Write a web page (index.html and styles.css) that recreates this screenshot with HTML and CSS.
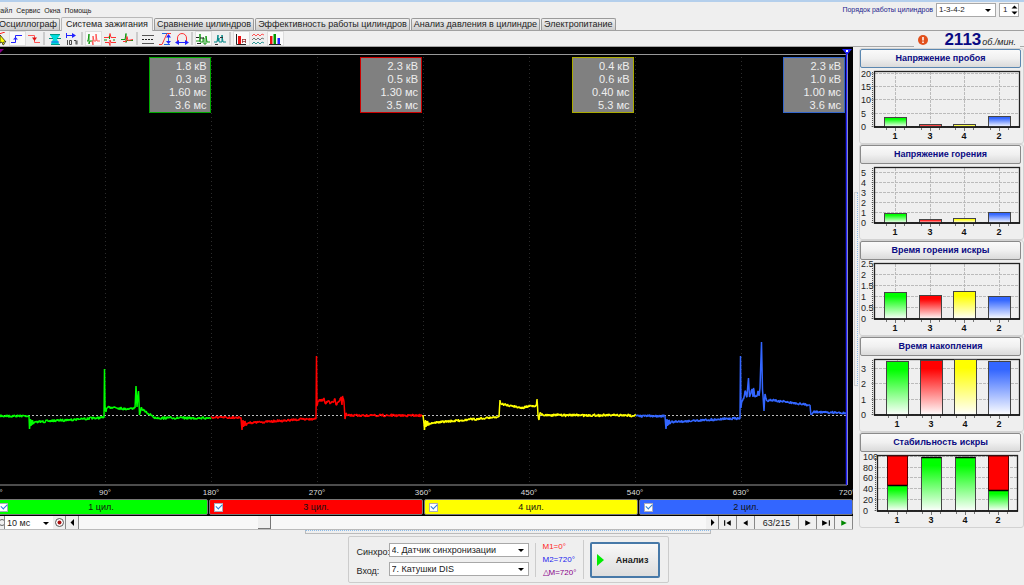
FILE: index.html
```html
<!DOCTYPE html>
<html lang="ru">
<head>
<meta charset="utf-8">
<title>Система зажигания</title>
<link rel="stylesheet" href="styles.css">
</head>
<body>
<header class="top">
  <div class="menu-row">
    <nav class="menu">
      <button>Файл</button><button>Сервис</button><button>Окна</button><button>Помощь</button>
    </nav>
    <div class="order">
      <label for="order">Порядок работы цилиндров</label>
      <span class="combo order-combo"><select id="order"><option>1-3-4-2</option></select></span>
      <span class="spin"><input id="first" type="text" value="1" aria-label="Первый цилиндр"><svg width="7" height="10" viewBox="0 0 7 10"><path d="M0.500 3.500 3.500 0.500 6.500 3.500zM0.500 6.500h6L3.500 9.500z"/></svg></span>
    </div>
  </div>
  <div class="tabs" role="tablist">
    <button class="tab" role="tab">Осциллограф</button>
    <button class="tab active" role="tab">Система зажигания</button>
    <button class="tab" role="tab">Сравнение цилиндров</button>
    <button class="tab" role="tab">Эффективность работы цилиндров</button>
    <button class="tab" role="tab">Анализ давления в цилиндре</button>
    <button class="tab" role="tab">Электропитание</button>
  </div>
  <div class="tool-row">
    <div class="tools">
      <button class="tool" aria-label="Курсор"><svg viewBox="0 0 14 14"><path d="M6 2 12 0" stroke="#f22"/><path d="M7 3v8l2-1 1 3 1.500-1-1-2h2.500z" fill="#ff0" stroke="#222" stroke-width=".8"/></svg></button>
      <button class="tool on" aria-label="Фронт"><svg viewBox="0 0 14 14"><path d="M1 10.500h4.500v-7H12" stroke="#22f"/><path d="M3 7.500h5L5.500 5z" fill="#22f"/></svg></button>
      <button class="tool" aria-label="Спад"><svg viewBox="0 0 14 14"><path d="M1 3.500h6.500v7H13" stroke="#f55"/><path d="M5 5.500h5L7.500 9z" fill="#d11"/></svg></button>
      <i class="sep"></i>
      <button class="tool" aria-label="Развёртка"><svg viewBox="0 0 14 14"><path d="M2 2.500h10M3 12.500h9" stroke="#098"/><path d="M2 3h10L9 7l2 5H3l2-5z" fill="#0dd"/><path d="M1 6.500h4m4 0h4" stroke="#087"/><path d="M3 10h8" stroke="#26e"/></svg></button>
      <button class="tool" aria-label="Градусы"><svg viewBox="0 0 14 14"><path d="M1.500 1v5M1 3.500h9" stroke="#22f"/><path d="M7 1v5l4-2.500z" fill="#22f"/><path d="M2.500 8v5m2-4.500h2v4h-2zm4.500 0h2v4m1-4v4" stroke="#222" stroke-width=".8"/></svg></button>
      <i class="sep"></i>
      <button class="tool on" aria-label="Парад"><svg viewBox="0 0 14 14"><path d="M1 9h1l1-7v10l1-3h3" stroke="#191"/><path d="M6 9l1 4V4l1 5h2V2l1 7h3" stroke="#f55"/></svg></button>
      <button class="tool" aria-label="Растр"><svg viewBox="0 0 14 14"><path d="M1 5.500h5l1-4 1 4h5M2 10.500h4l1 3V8l1 2.500h5" stroke="#f33"/><path d="M6.500 7V4" stroke="#191"/><path d="M1 8h3m6 0h2" stroke="#191"/></svg></button>
      <button class="tool" aria-label="Наложение"><svg viewBox="0 0 14 14"><path d="M1 7.500h4l1-6v9l1-2h6" stroke="#191"/><path d="M3 9.500h3l1-5 1 4 5-1" stroke="#f33"/></svg></button>
      <i class="sep"></i>
      <button class="tool" aria-label="Линии"><svg viewBox="0 0 14 14"><path d="M1 3.500h12M1 11.500h12" stroke="#555"/><path d="M1 7.500h12" stroke="#222" stroke-dasharray="2 1"/></svg></button>
      <button class="tool" aria-label="Размах"><svg viewBox="0 0 14 14"><path d="M1 12.500h3L9 1.500h4" stroke="#f33"/><path d="M4 1.500h5M6 12.500h6M10.500 4v7" stroke="#26d"/><path d="M8 5.500h5L10.500 2zM8 9h5l-2.500 3z" fill="#22f"/></svg></button>
      <button class="tool" aria-label="Период"><svg viewBox="0 0 14 14"><path d="M2.500 10V6a4.500 4.500 0 0 1 9 0v4" stroke="#f33"/><path d="M3 10.500h8" stroke="#22f"/><path d="M4 8v5L0 10.500zM10 8v5l4-2.500z" fill="#22f"/></svg></button>
      <i class="sep"></i>
      <button class="tool on" aria-label="Маркеры"><svg viewBox="0 0 14 14"><path d="M0 9h4V2v8h3V6h1v6h2V4l1 6h3" stroke="#191"/><path d="M0 5.500h3M4 6h4M1 11.500h4" stroke="#222"/></svg></button>
      <button class="tool" aria-label="Сигнал"><svg viewBox="0 0 14 14"><path d="M1 10h3l1-7v6l1-3v4h3V3l1 7h3" stroke="#088"/><path d="M2 12.500h3M7 5.500h3" stroke="#333"/></svg></button>
      <i class="sep"></i>
      <button class="tool on" aria-label="Гистограмма"><svg viewBox="0 0 14 14"><path d="M2.500 2v10.500H12" stroke="#222"/><path d="M4 4h3v8H4z" fill="#e11"/><path d="M8 7.500h4M8 9.500h4M8.500 7v4m3-4v4" stroke="#933" stroke-width=".8"/></svg></button>
      <button class="tool" aria-label="Волны"><svg viewBox="0 0 14 14"><path d="M1 4l2-2 2 2 2-2 2 2 2-2 2 1" stroke="#f55"/><path d="M1 8l2-2 2 2 2-2 2 2 2-2 2 1" stroke="#777"/><path d="M1 12l2-2 2 2 2-2 2 2 2-2 2 1" stroke="#399"/></svg></button>
      <button class="tool on" aria-label="Диаграммы"><svg viewBox="0 0 14 14"><path d="M2 4h2.500v8H2z" fill="#e11"/><path d="M5.500 2H8v10H5.500z" fill="#090"/><path d="M9.500 6H12v6H9.500z" fill="#22f"/><path d="M1 12.500h12" stroke="#222"/></svg></button>
    </div>
    <div class="rpm">
      <svg width="10" height="10" viewBox="0 0 10 10"><circle cx="5" cy="5" r="5" fill="#e2501c"/><path d="M5 2v3.500M5 6.500v1.500" stroke="#fff" stroke-width="1.500"/></svg>
      <strong>2113</strong><em>об./мин.</em>
    </div>
  </div>
</header>

<main class="main">
  <section class="scope">
    <div class="plot">
      <svg class="wave" viewBox="0 47 853 440" preserveAspectRatio="none" id="wave"></svg>
      <div class="readouts">
        <div class="readout green">1.8 кВ<br>0.3 кВ<br>1.60 мс<br>3.6 мс</div>
        <div class="readout red">2.3 кВ<br>0.5 кВ<br>1.30 мс<br>3.5 мс</div>
        <div class="readout yellow">0.4 кВ<br>0.6 кВ<br>0.40 мс<br>5.3 мс</div>
        <div class="readout blue">2.3 кВ<br>1.0 кВ<br>1.00 мс<br>3.6 мс</div>
      </div>
    </div>
    <div class="degrees"><span>0°</span><span>90°</span><span>180°</span><span>270°</span><span>360°</span><span>450°</span><span>540°</span><span>630°</span><span>720°</span></div>
    <div class="channels">
      <label class="channel green"><input type="checkbox" checked><span>1 цил.</span></label>
      <label class="channel red"><input type="checkbox" checked><span>3 цил.</span></label>
      <label class="channel yellow"><input type="checkbox" checked><span>4 цил.</span></label>
      <label class="channel blue"><input type="checkbox" checked><span>2 цил.</span></label>
    </div>
    <div class="transport">
      <button class="nav cut" aria-label="Масштаб"><svg viewBox="0 0 9 9"><circle cx="4" cy="4.500" r="3" fill="none" stroke="#666"/></svg></button>
      <span class="combo time"><select aria-label="Развёртка"><option>10 мс</option></select></span>
      <button class="nav" aria-label="Запись"><svg viewBox="0 0 9 9"><circle cx="4.500" cy="4.500" r="4" fill="#fff" stroke="#555"/><circle cx="4.500" cy="4.500" r="2" fill="#a11"/></svg></button>
      <button class="nav" aria-label="Влево"><svg viewBox="0 0 9 9"><path d="M6 1v7L2.500 4.500z"/></svg></button>
      <div class="track"><div class="before"></div><div class="thumb"></div></div>
      <button class="nav" aria-label="Вправо"><svg viewBox="0 0 9 9"><path d="M3 1v7l3.500-3.500z"/></svg></button>
      <button class="nav wide" aria-label="В начало"><svg viewBox="0 0 9 9"><path d="M1 2h1v5H1zM7 2v5L3 4.500z"/></svg></button>
      <button class="nav wide" aria-label="Назад"><svg viewBox="0 0 9 9"><path d="M6 2v5L2 4.500z"/></svg></button>
      <output class="frame">63/215</output>
      <button class="nav wide" aria-label="Вперёд"><svg viewBox="0 0 9 9"><path d="M2 2v5l5-2.500z"/></svg></button>
      <button class="nav wide" aria-label="В конец"><svg viewBox="0 0 9 9"><path d="M1 2v5l5-2.500zM7 2h1v5H7z"/></svg></button>
      <button class="nav wide" aria-label="Пуск"><svg viewBox="0 0 9 9"><path d="M2 2v5l5-2.500z" fill="#080"/></svg></button>
    </div>
  </section>
  <div class="vsplit"><i></i></div>
  <aside class="charts" id="charts"></aside>
</main>
<div class="hsplit"><i></i></div>
<footer class="footer">
  <div class="control">
    <div class="inputs">
      <label for="sync">Синхро:</label><span class="combo"><select id="sync"><option>4. Датчик синхронизации</option></select></span>
      <label for="input">Вход:</label><span class="combo"><select id="input"><option>7. Катушки DIS</option></select></span>
    </div>
    <div class="marks"><span class="m1">M1=0°</span><span class="m2">M2=720°</span><span class="dm">△M=720°</span></div>
    <button class="analyze"><svg width="7" height="12" viewBox="0 0 7 12"><path d="M0 0v12l7-6z" fill="#0e0"/></svg><span>Анализ</span></button>
  </div>
</footer>
<script src="app.js"></script>
</body>
</html>
```
FILE: styles.css
```css
* { box-sizing: border-box; }
body {
  margin: 0; height: 100vh; display: flex; flex-direction: column; overflow: hidden;
  background: #efefef; color: #222; font: 9px/12px "Liberation Sans", Arial, sans-serif;
  border-top: 2px solid #b4cfec;
}
button, select, input { font: inherit; color: inherit; margin: 0; padding: 0; border: 0; border-radius: 0; background: none; }
.menu-row { display: flex; justify-content: space-between; height: 15px; }
.menu { display: flex; gap: 4px; margin-left: -5px; padding-top: 3px; font: 7px/12px "Liberation Sans", Arial, sans-serif; }
.order { display: flex; align-items: center; color: #22228c; padding-right: 5px; gap: 3px; font: 7px/12px "Liberation Sans", Arial, sans-serif; }
.combo { position: relative; display: block; background: #fff; border: 1px solid #a8a8a8; color: #222; }
.combo select { appearance: none; display: block; width: 100%; height: 100%; padding: 0 14px 0 2px; outline: 0; }
.combo::after { content: ""; position: absolute; right: 4px; top: 50%; margin-top: -1px; border: 3px solid transparent; border-top-color: #000; border-bottom: 0; pointer-events: none; }
.order-combo { width: 60px; height: 14px; font-size: 8px; }
.spin { display: flex; align-items: center; width: 20px; height: 14px; background: #fff; border: 1px solid #a8a8a8; color: #222; font-size: 8px; }
.spin input { width: 11px; min-width: 0; padding-left: 3px; }

.tabs { display: flex; align-items: flex-end; gap: 1px; height: 14px; margin-left: -4px; border-bottom: 1px solid #a0a0a0; font: 9px/11px "Liberation Sans", Arial, sans-serif; }
.tab { height: 12px; padding: 0 2px; border: 1px solid #9a9a9a; border-bottom: 0; border-radius: 2px 2px 0 0; background: linear-gradient(#f0f0f0, #cdcdcd); white-space: nowrap; }
.tab.active { height: 14px; padding: 0 4px; margin-bottom: -1px; background: #efefef; border-color: #b8b8b8; }
.tool-row { display: flex; justify-content: space-between; height: 16px; border-bottom: 1px solid #a8a8a8; }
.tools { display: flex; margin-left: -8px; }
.tool { width: 17px; height: 15px; padding: 0 1px; }
.tool.on { background: #fafafa; border: 1px solid #ddd; padding: 0; }
.tool svg { display: block; width: 14px; height: 14px; fill: none; }
.sep { width: 4px; margin: 1px 0; border-left: 2px solid #ccc; }
.rpm { display: flex; align-items: center; height: 18px; padding: 0 4px; margin-right: 4px; background: #efefef; }
.rpm strong { color: #0a0a82; font-size: 17px; line-height: 18px; margin-left: 16px; }
.rpm em { font-size: 9px; margin: 4px 0 0 1px; }

.main { flex: 1; min-height: 0; display: grid; grid-template-columns: minmax(0, 1fr) 6px 165px; }
.scope { display: flex; flex-direction: column; min-width: 0; min-height: 0; overflow: hidden; background: #000; }
.plot { position: relative; flex: 1; min-height: 0; }
.wave { position: absolute; inset: 0; width: 100%; height: 100%; }
.readouts { position: absolute; inset: 0 7px auto 0; display: grid; grid-template-columns: repeat(4, 1fr); padding-top: 10px; }
.readout { justify-self: end; width: 62px; margin-right: 1px; padding: 2px 3px 0 0; height: 56px; background: #808080; border: 1px solid; color: #eee; text-align: right; font-size: 11px; line-height: 13px; white-space: nowrap; }
.readout.green { border-color: #0a0; }
.readout.red { border-color: #c00; }
.readout.yellow { border-color: #aa0; }
.readout.blue { border-color: #36c; }
.degrees { display: flex; justify-content: space-between; height: 11px; margin: 0 6px 0 -1px; color: #ddd; font: 8px/11px "Liberation Sans", Arial, sans-serif; }
.degrees span { display: flex; justify-content: center; width: 0; white-space: nowrap; }
.channels { display: flex; height: 18px; margin-left: -6px; padding: 1px 0; gap: 1px; }
.channel { flex: 1; display: flex; align-items: center; padding-left: 4px; border: 1px solid #777; border-radius: 2px; color: #111; }
.channel span { flex: 1; text-align: center; padding-right: 13px; }
.channel.green { background: #0f0; }
.channel.red { background: #f00; }
.channel.yellow { background: #ff0; }
.channel.blue { background: #36f; }
.channel input { appearance: none; display: grid; place-items: center; width: 9px; height: 9px; background: #fff; border: 1px solid #aab; }
.channel input:checked::after { content: ""; width: 5px; height: 3px; margin-bottom: 2px; border: solid #2a7fd8; border-width: 0 0 1px 1px; transform: rotate(-45deg); }
.transport { display: flex; height: 14px; background: #fff; border-bottom: 1px solid #bbb; }
.nav { display: flex; align-items: center; justify-content: center; width: 13px; background: #f0f0f0; border-right: 1px solid #888; }
.nav.cut { width: 5px; overflow: hidden; }
.nav svg { flex: none; width: 9px; height: 9px; }
.nav.wide { width: 18px; }
.nav.wide svg { width: 10px; height: 10px; }
.time { width: 48px; border-width: 0; }
.track { flex: 1; display: flex; background: #f8f8f8; }
.before { width: 28.500%; }
.thumb { width: 13px; background: #efefef; border-right: 1px solid #777; border-bottom: 1px solid #777; }
.frame { width: 44px; text-align: center; background: #f0f0f0; border-right: 1px solid #999; line-height: 14px; }
.vsplit { display: flex; align-items: center; justify-content: center; }
.vsplit i { width: 4px; height: 194px; border: 1px solid #ccc; border-right-style: dotted; border-right-color: #8bbbe8; }
.hsplit { display: flex; justify-content: center; height: 5px; padding-right: 9px; }
.hsplit i { width: 40%; height: 4px; border: 1px solid #bbb; border-top-style: dotted; border-top-color: #8bbbe8; }

.charts { display: flex; flex-direction: column; padding-top: 1px; }
.chart { height: 96px; padding: 0 2px 0 0; border: 1px solid #d2d2d2; border-radius: 3px; }
.chart-title { display: block; width: 100%; height: 19px; border: 1px solid #8a8a8a; border-radius: 2px; background: linear-gradient(#fafafa, #f0f0f0 50%, #dadada); color: #0a0a82; font-weight: bold; font-size: 9px; line-height: 17px; }
.chart:first-child .chart-title { border: 1px solid #5b87b0; }
.chart svg { display: block; width: 100%; height: 74px; margin-top: 2px; overflow: visible; font-size: 9px; }
.chart .cyl { font-weight: bold; }

.footer { display: flex; justify-content: center; height: 50px; padding: 1px 8px 2px 0; }
.control { display: flex; align-items: center; width: 321px; border: 1px solid #ccc; border-radius: 2px; padding: 0 8px; }
.inputs { display: grid; grid-template-columns: 32px 140px; row-gap: 4px; align-items: center; padding-right: 6px; border-right: 1px solid #ccc; }
.inputs label { white-space: nowrap; padding-top: 3px; }
.inputs .combo { height: 14px; }
.marks { display: flex; flex-direction: column; width: 49px; margin-right: 6px; padding-left: 7px; border-right: 1px solid #ccc; font-size: 8px; line-height: 13px; white-space: nowrap; }
.m1 { color: #f22; }
.m2 { color: #22e; }
.dm { color: #808; }
.analyze { display: flex; align-items: center; gap: 12px; width: 71px; height: 36px; padding-left: 5px; border: 2px solid #4779a8; border-radius: 2px; background: linear-gradient(#f8f8f8, #ddd); font: bold 9px/12px "Liberation Sans", Arial, sans-serif; }
```
FILE: app.js
```javascript
// Repeatable noise, so that every redraw gives the same trace
let seed = 7;
function rnd() { seed = (seed * 16807) % 2147483647; return seed / 2147483647 - 0.5; }

function trace(points, color) {
  let d = '';
  points.forEach(([x, y], i) => {
    if (i) {
      const [px, py] = points[i - 1];
      const n = Math.floor((x - px) / 0.4);
      for (let k = 1; k < n; k++) {
        d += `L${(px + (x - px) * k / n).toFixed(1)} ${(py + (y - py) * k / n + rnd() * 2.6).toFixed(1)}`;
      }
    }
    d += `${i ? 'L' : 'M'}${x} ${y}`;
  });
  return `<path d="${d}" fill="none" stroke="${color}" stroke-width="1.5" stroke-linejoin="bevel"/>`;
}
function ring(x, y) {
  return [[x, y + 7], [x + 1, y - 3], [x + 1.5, y + 4], [x + 2, y - 2], [x + 2.5, y + 3], [x + 3, y - 2], [x + 4, y + 2], [x + 5, y]];
}
let plot = '';
for (let i = 1; i < 8; i++) {
  const x = i * 106 - 0.5;
  plot += `<path d="M${x} 57V485" stroke="#2c2c2c" stroke-dasharray="1 3"/>`;
}
plot += '<path d="M0 54.5H847M0 485H847" stroke="#999" fill="none"/>';
plot += '<path d="M0 415.5H847" stroke="#bbb" stroke-dasharray="2 2"/>';
plot += '<path d="M847.5 54V485" stroke="#aaa"/><path d="M846.5 54V485" stroke="#22f" stroke-width="1.5"/>';
plot += '<path d="M842 49h10l-5 6z" fill="#22f"/><path d="M846 50h2v2h-2z" fill="#fff"/><path d="M0 49h4l-4 4z" fill="#808"/>';
plot += trace([[0, 416], [29, 416], ...ring(29.5, 422), [104, 417.5], [104.5, 369], [105, 406], [106, 412], [107, 408], [113, 407], [125, 409], [135, 408],
  [136, 386], [137, 407], [138.5, 391], [139.5, 415], [141, 408], [143, 410], [155, 418], [211, 418]], '#0f0');
plot += trace([[211, 417.5], [241, 417.5], ...ring(242, 423), [316, 418.5], [316.5, 356], [317, 406], [318, 401], [323, 400], [324, 398], [325, 403], [329, 401], [330, 404],
  [334, 401], [335, 399], [336, 405], [339, 402], [341, 397], [342, 405], [342.5, 396], [344, 402], [345, 419], [346, 413], [347, 415.5], [423, 415.5]], '#f00');
plot += trace([[423, 415], ...ring(424.5, 423), [499, 417], [500, 400], [501, 404], [513, 406], [523, 408], [530, 406], [536, 406], [537, 399], [538, 415], [539, 420], [540, 413], [543, 415], [636, 415.5]], '#ff0');
plot += trace([[636, 416], [665, 416], ...ring(666, 422), [740, 418], [740.5, 356], [741, 408], [742, 401], [744, 397], [745, 391], [747, 397], [748.5, 378], [749.5, 397], [752, 389],
  [753, 397], [753.5, 388], [755, 397], [757, 396], [758, 391], [759, 396], [760, 388], [761.5, 342], [762.5, 390], [764, 411], [765, 394], [767, 401], [770, 400], [810, 405], [811, 415], [813, 412], [846, 413]], '#36f');
document.getElementById('wave').innerHTML = plot;

// Bar charts: y values are in the chart's own 161 x 74 drawing area
const colors = ['#0f0', '#f00', '#ff0', '#36f'];
const charts = [
  { title: 'Напряжение пробоя', left: 14, right: 160, labels: [['20', 4], ['15', 17], ['10', 30], ['5', 44], ['0', 57]], x: [35, 70, 104, 139], w: 22, tops: [48, 55, 55, 47] },
  { title: 'Напряжение горения', left: 14, right: 160, labels: [['5', 7], ['4', 17], ['3', 27], ['2', 37], ['1', 47], ['0', 57]], x: [35, 70, 104, 139], w: 22, tops: [48, 54, 53, 47] },
  { title: 'Время горения искры', left: 14, right: 160, labels: [['2.5', 2], ['2', 13], ['1.5', 24], ['1', 35], ['0.5', 46], ['0', 57]], x: [35, 70, 104, 139], w: 22, tops: [31, 34, 30, 35] },
  { title: 'Время накопления', left: 14, right: 160, labels: [['3', 11], ['2', 26], ['1', 42], ['0', 57]], x: [37, 71, 105, 139], w: 22, tops: [4, 3, 2, 4] },
  { title: 'Стабильность искры', left: 17, right: 158, labels: [['100', 3], ['80', 14], ['60', 24], ['40', 35], ['20', 46], ['0', 57]], x: [37, 71, 105, 138], w: 20, tops: [32, 4, 4, 37], stable: true }
];
const gradients = colors.map((c, i) => `<linearGradient id="g${i}" x2="0" y2="1"><stop offset=".15" stop-color="${c}"/><stop offset="1" stop-color="#fff"/></linearGradient>`).join('');
document.getElementById('charts').innerHTML = charts.map((c, n) => {
  let s = n === 0 ? `<defs>${gradients}</defs>` : '';
  c.labels.forEach(([t, y]) => {
    s += `<path d="M${c.left - 3} ${y - 0.5}H${c.right}" stroke="#bbb" stroke-dasharray="3 1"/>`;
    s += `<text x="${c.stable ? 3 : 1}" y="${y + 3}" fill="#222">${t}</text>`;
  });
  c.x.forEach((x, i) => {
    s += `<path d="M${x + 0.5} 2V60" stroke="#bbb" stroke-dasharray="3 1"/>`;
    s += `<path d="M${x + 0.5} 58v3M${x - 8.5} 58v2M${x + 9.5} 58v2" stroke="#777"/>`;
    s += `<text class="cyl" x="${x}" y="69" text-anchor="middle" fill="#111">${[1, 3, 4, 2][i]}</text>`;
  });
  s += `<path d="M${c.left - 1.5} 2V57" stroke="#555" stroke-dasharray="1 1"/>`;
  s += `<rect x="${c.left + 0.5}" y="1.5" width="${c.right - c.left - 1}" height="55.5" fill="none" stroke="#222" stroke-width="1.3"/>`;
  c.x.forEach((x, i) => {
    const l = x - c.w / 2 + 0.5, top = c.tops[i];
    if (c.stable && top > 5) s += `<rect x="${l}" y="2" width="${c.w}" height="${top - 2}" fill="#f00" stroke="#500"/>`;
    s += `<rect x="${l}" y="${top - 0.5}" width="${c.w}" height="${57.5 - top}" fill="url(#g${c.stable ? 0 : i})" stroke="#444"/>`;
    if (c.stable) s += `<path d="M${l} ${top - 0.5}h${c.w}" stroke="#000" stroke-width="1.5"/>`;
  });
  s += `<path d="M${c.left} 57H${c.right}" stroke="#111" stroke-width="1.3"/>`;
  return `<div class="chart"><button class="chart-title">${c.title}</button><svg viewBox="0 0 161 74">${s}</svg></div>`;
}).join('');
```
